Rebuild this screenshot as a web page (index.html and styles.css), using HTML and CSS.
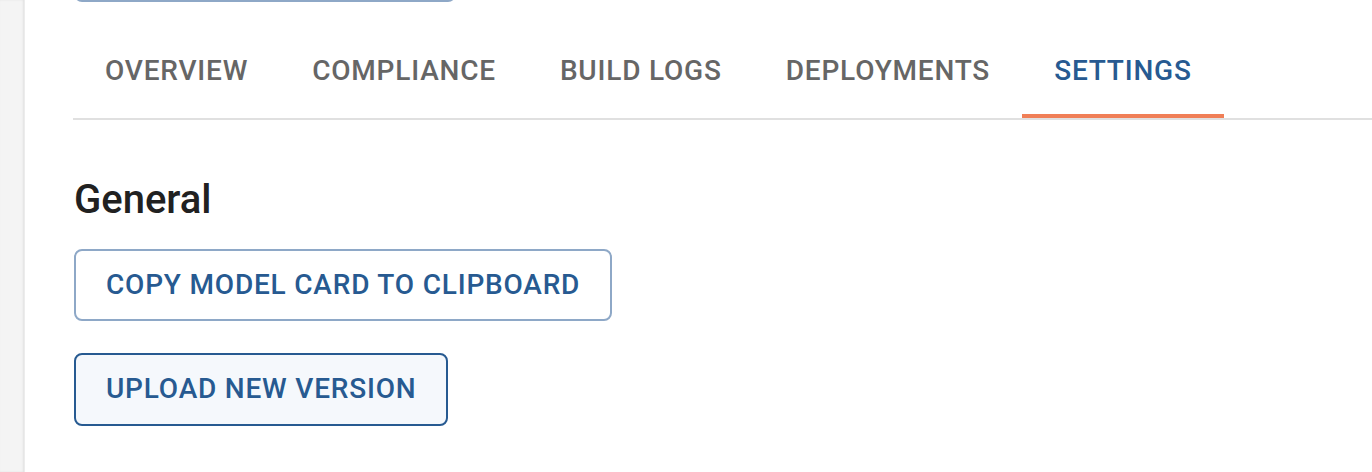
FILE: index.html
```html
<!DOCTYPE html>
<html lang="en">
<head>
<meta charset="utf-8">
<title>Settings</title>
<link rel="stylesheet" href="styles.css">
</head>
<body>
<aside class="sidebar"></aside>
<main class="main">
  <div class="top-btn" aria-hidden="true"></div>
  <nav class="tabs">
    <div class="tab">Overview</div>
    <div class="tab">Compliance</div>
    <div class="tab">Build Logs</div>
    <div class="tab">Deployments</div>
    <div class="tab tab-active">Settings</div>
  </nav>
  <section class="section">
    <h2 class="section-title">General</h2>
    <div class="actions">
      <button class="btn btn-outlined" type="button">Copy model card to clipboard</button>
      <button class="btn btn-strong" type="button">Upload new version</button>
    </div>
  </section>
</main>
</body>
</html>
```

FILE: styles.css
```css
html, body {
  margin: 0;
  padding: 0;
  height: 472px;
  overflow: hidden;
  background: #ffffff;
}

body {
  display: flex;
  font-family: Roboto, "Liberation Sans", Arial, sans-serif;
}

.sidebar {
  width: 24px;
  flex: 0 0 24px;
  background: #f4f4f4;
  box-shadow: inset -1px 0 2px rgba(0, 0, 0, 0.08);
  border-right: 1px solid #ececec;
}

.main {
  flex: 1;
  padding-left: 48px;
  display: flex;
  flex-direction: column;
  align-items: flex-start;
}

.btn {
  font-family: Roboto, "Liberation Sans", Arial, sans-serif;
  font-weight: 500;
  font-size: 28px;
  line-height: 48px;
  letter-spacing: 0.8px;
  text-transform: uppercase;
  color: #275a91;
  background: #ffffff;
  border: 2px solid #8ea8c7;
  border-radius: 8px;
  padding: 10px 30px;
  margin: 0;
  cursor: pointer;
}

.top-btn {
  box-sizing: border-box;
  width: 382px;
  height: 72px;
  margin-top: -70px;
  margin-left: 1px;
  border: 2px solid #8ea8c7;
  border-radius: 8px;
  background: #ffffff;
}

.btn-strong {
  background: #f5f8fc;
  border-color: #275a91;
  padding-bottom: 11px;
}

.tabs {
  margin-top: 20px;
  display: flex;
  align-self: stretch;
  border-bottom: 2px solid #e0e0e0;
}

.tab {
  position: relative;
  height: 96px;
  padding: 0 32px;
  display: flex;
  align-items: center;
  font-size: 28px;
  font-weight: 500;
  letter-spacing: 0.8px;
  text-transform: uppercase;
  color: #666666;
}

.tab-active {
  color: #275a91;
}

.tab-active::after {
  content: "";
  position: absolute;
  left: 0;
  right: 0;
  bottom: 0;
  height: 4px;
  background: #f07f57;
}

.section {
  margin-top: 48px;
  padding-left: 1px;
}

.section-title {
  margin: 0;
  font-size: 40px;
  font-weight: 500;
  line-height: 64px;
  color: #212121;
}

.actions {
  margin-top: 17px;
  display: flex;
  flex-direction: column;
  align-items: flex-start;
  gap: 32px;
}
```
